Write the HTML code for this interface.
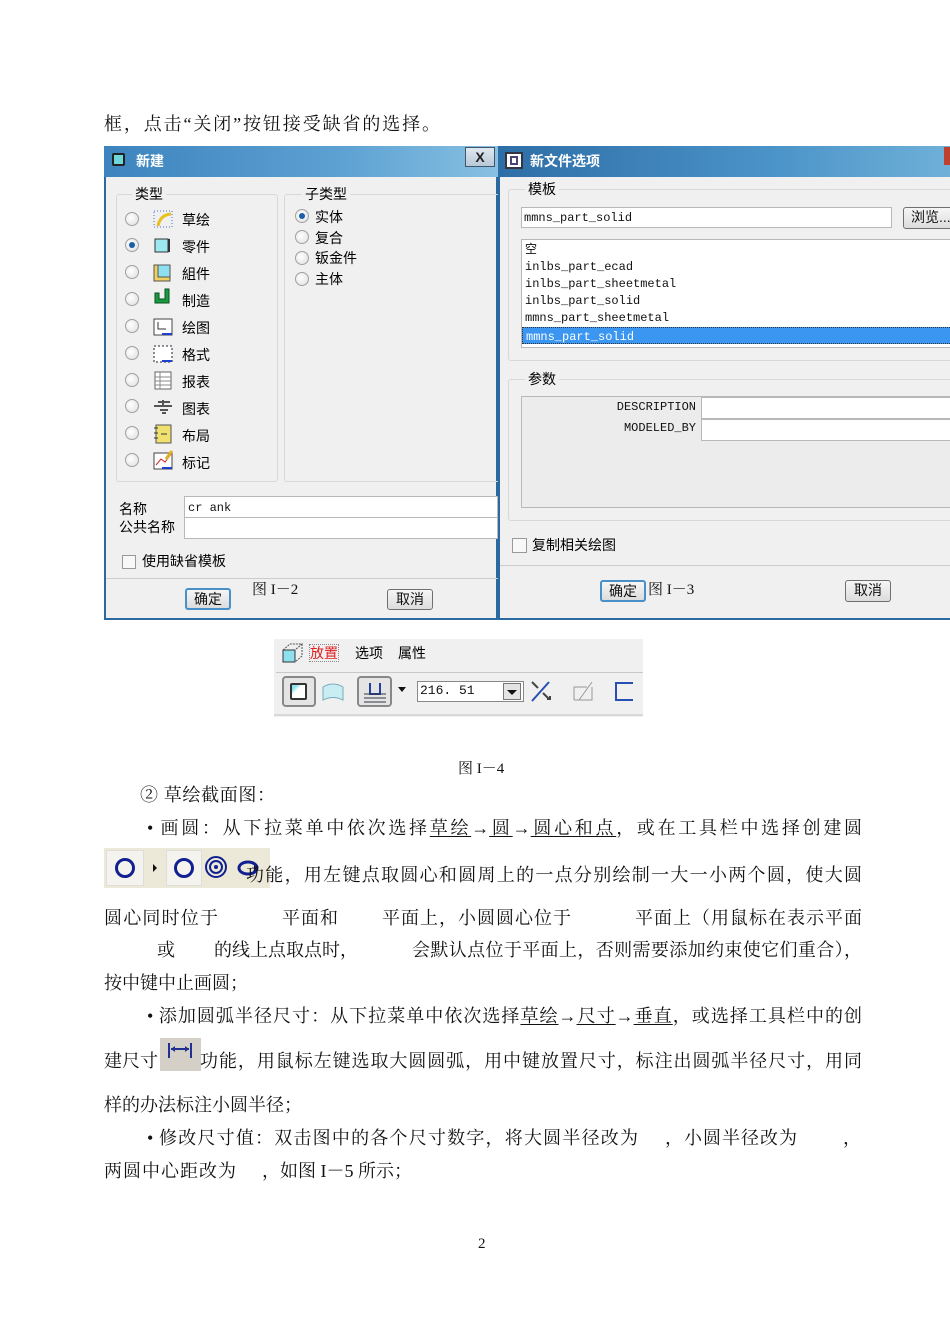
<!DOCTYPE html>
<html><head><meta charset="utf-8"><style>
*{margin:0;padding:0;box-sizing:border-box}
body{width:950px;height:1343px;background:#fff;position:relative;overflow:hidden;font-family:"Liberation Serif","Noto Serif CJK SC",serif;color:#111}
.a{position:absolute}
.t{position:absolute;font-size:18px;line-height:22px;white-space:nowrap;text-align-last:justify;text-align:justify}
.u{text-decoration:underline;text-underline-offset:2px}
.ui{font-family:"Liberation Sans","Noto Sans CJK SC",sans-serif;font-size:14px;line-height:16px;white-space:nowrap;color:#000}
.mono{font-family:"Liberation Mono","DejaVu Sans Mono",monospace;font-size:12px;line-height:14px;white-space:nowrap}
.rad{position:absolute;width:14px;height:14px;border-radius:50%;border:1px solid #a0a0a0;background:radial-gradient(circle at 40% 40%,#fff,#ddd)}
.rad.on::after{content:"";position:absolute;left:3px;top:3px;width:6px;height:6px;border-radius:50%;background:#1a5ea8}
.grp{position:absolute;border:1px solid #d8d8d8;border-radius:3px}
.btn{position:absolute;border:1px solid #707070;border-radius:3px;background:linear-gradient(#f6f6f6,#dcdcdc);text-align:center;font-family:"Liberation Sans","Noto Sans CJK SC",sans-serif;font-size:14px;line-height:19px}
.inp{position:absolute;background:#fff;border:1px solid #b8b8b8}
.title{position:absolute;background:linear-gradient(90deg,#2e6ea6,#4a93c8 60%,#6fb0d8);color:#fff;font-family:"Liberation Sans","Noto Sans CJK SC",sans-serif;font-weight:bold;font-size:14px}
</style></head><body>

<div class="t" style="left:104px;top:113px;width:336px">框，点击“关闭”按钮接受缺省的选择。</div>

<!-- Left dialog -->
<div class="a" style="left:104px;top:146px;width:394px;height:474px;background:#f0f0f0;border:2px solid #2a6aa0;border-top:none"></div>
<div class="title" style="left:104px;top:146px;width:394px;height:31px;background:linear-gradient(90deg,#3d84bf,#5da1d2 60%,#87c0e2)"></div>
<div class="a" style="left:112px;top:153px;width:13px;height:13px;background:#6ed8d8;border:2px solid #222;border-radius:2px"></div>
<div class="a ui" style="left:136px;top:153px;color:#fff;font-weight:bold;font-size:14px">新建</div>
<div class="a" style="left:465px;top:147px;width:30px;height:20px;border:1px solid #456;background:linear-gradient(#dfe8f0,#b8c8d8);font:bold 14px 'Liberation Sans',sans-serif;text-align:center;line-height:18px;color:#222">X</div>
<div class="grp" style="left:116px;top:194px;width:162px;height:288px"></div>
<div class="a ui" style="left:132px;top:186px;background:#f0f0f0;padding:0 3px">类型</div>
<div class="grp" style="left:284px;top:194px;width:216px;height:288px"></div>
<div class="a ui" style="left:302px;top:186px;background:#f0f0f0;padding:0 3px">子类型</div>

<div class="rad" style="left:125px;top:212px"></div>
<div class="rad on" style="left:125px;top:238px"></div>
<div class="rad" style="left:125px;top:265px"></div>
<div class="rad" style="left:125px;top:292px"></div>
<div class="rad" style="left:125px;top:319px"></div>
<div class="rad" style="left:125px;top:346px"></div>
<div class="rad" style="left:125px;top:373px"></div>
<div class="rad" style="left:125px;top:399px"></div>
<div class="rad" style="left:125px;top:426px"></div>
<div class="rad" style="left:125px;top:453px"></div>

<svg class="a" style="left:152px;top:209px" width="24" height="262" viewBox="0 0 24 262">
<rect x="2" y="2" width="18" height="16" fill="none" stroke="#4a6fd0" stroke-dasharray="1 2"/><path d="M6 17 Q8 6 19 5" stroke="#e8c020" stroke-width="3" fill="none"/>
<rect x="3" y="30" width="13" height="13" fill="#9ee8f0" stroke="#333"/><rect x="16" y="30" width="2" height="13" fill="#333"/>
<rect x="2" y="56" width="16" height="16" fill="#f0d060" stroke="#555"/><rect x="6" y="56" width="12" height="12" fill="#8ee0f0" stroke="#555"/>
<path d="M3 84 h4 v6 h6 v-10 h4 v14 h-14z" fill="#1a9a40" stroke="#0a5020"/>
<rect x="2" y="110" width="18" height="16" fill="#fff" stroke="#444"/><path d="M6 113 v7 h8" stroke="#333" fill="none"/><path d="M10 125 h10" stroke="#2040d0" stroke-width="2"/>
<rect x="2" y="137" width="18" height="16" fill="#fff" stroke="#223" stroke-dasharray="2 2"/><path d="M10 152 h10" stroke="#2040d0" stroke-width="2"/>
<rect x="3" y="163" width="16" height="17" fill="#fff" stroke="#666"/><path d="M3 168h16M3 172h16M3 176h16M8 163v17" stroke="#888"/>
<path d="M2 197 h18 M11 191 v6 M6 193 h12 M8 201 h8 M10 204 h4" stroke="#555" stroke-width="2"/>
<rect x="4" y="216" width="15" height="18" fill="#f0e070" stroke="#555"/><path d="M2 219h4M2 224h4M2 229h4M9 225h6" stroke="#333"/>
<rect x="2" y="244" width="18" height="16" fill="#fff" stroke="#444"/><path d="M4 256 l5-6 4 3 7-9" stroke="#d02020" fill="none"/><path d="M20 242 l-6 8" stroke="#e0b020" stroke-width="3"/><path d="M10 259 h10" stroke="#2040d0" stroke-width="2"/>
</svg>
<div class="a ui" style="left:182px;top:207px;line-height:27px">草绘<br>零件<br>組件<br>制造<br>绘图<br>格式<br>报表<br>图表<br>布局<br>标记</div>

<div class="rad on" style="left:295px;top:209px"></div>
<div class="rad" style="left:295px;top:230px"></div>
<div class="rad" style="left:295px;top:251px"></div>
<div class="rad" style="left:295px;top:272px"></div>
<div class="a ui" style="left:315px;top:207px;line-height:20.7px">实体<br>复合<br>钣金件<br>主体</div>

<div class="a ui" style="left:119px;top:501px">名称</div>
<div class="a ui" style="left:119px;top:519px">公共名称</div>
<div class="inp" style="left:184px;top:496px;width:314px;height:22px"></div>
<div class="inp" style="left:184px;top:517px;width:314px;height:22px"></div>
<div class="a mono" style="left:188px;top:501px">cr ank</div>
<div class="a" style="left:122px;top:555px;width:14px;height:14px;border:1px solid #999;background:#f8f8f8"></div>
<div class="a ui" style="left:142px;top:553px">使用缺省模板</div>
<div class="a" style="left:106px;top:578px;width:392px;height:1px;background:#ccc"></div>
<div class="btn" style="left:185px;top:588px;width:46px;height:22px;border:2px solid #4a90c8">确定</div>
<div class="btn" style="left:387px;top:589px;width:46px;height:21px">取消</div>
<div class="a" style="left:252px;top:578px;font-size:15px">图 I－2</div>

<!-- Right dialog -->
<div class="a" style="left:498px;top:146px;width:452px;height:474px;background:#f0f0f0;border:2px solid #2a6aa0;border-top:none;border-right:none"></div>
<div class="title" style="left:498px;top:146px;width:452px;height:31px"></div>
<div class="a" style="left:505px;top:152px;width:18px;height:17px;border:2px solid #334;background:#fff"><div style="position:absolute;left:3px;top:2px;width:8px;height:9px;border:2px solid #447"></div></div>
<div class="a ui" style="left:530px;top:153px;color:#fff;font-weight:bold">新文件选项</div>
<div class="a" style="left:944px;top:147px;width:6px;height:18px;background:#c04030"></div>
<div class="grp" style="left:508px;top:189px;width:446px;height:172px"></div>
<div class="a ui" style="left:525px;top:181px;background:#f0f0f0;padding:0 3px">模板</div>
<div class="inp" style="left:521px;top:207px;width:371px;height:21px"></div>
<div class="a mono" style="left:524px;top:211px">mmns_part_solid</div>
<div class="btn" style="left:903px;top:207px;width:52px;height:22px;text-align:left;padding-left:7px">浏览...</div>
<div class="inp" style="left:521px;top:239px;width:432px;height:109px"></div>
<div class="a mono" style="left:525px;top:242px;line-height:17.1px">空<br>inlbs_part_ecad<br>inlbs_part_sheetmetal<br>inlbs_part_solid<br>mmns_part_sheetmetal</div>
<div class="a mono" style="left:522px;top:327px;width:430px;height:17px;background:#3a96f0;color:#fff;padding:2px 3px;border:1px dotted #333">mmns_part_solid</div>
<div class="grp" style="left:508px;top:379px;width:446px;height:142px"></div>
<div class="a ui" style="left:525px;top:371px;background:#f0f0f0;padding:0 3px">参数</div>
<div class="a" style="left:521px;top:396px;width:432px;height:112px;border:1px solid #b8b8b8;background:#ececec"></div>
<div class="a mono" style="left:560px;top:400px;width:136px;text-align:right">DESCRIPTION</div>
<div class="a mono" style="left:560px;top:421px;width:136px;text-align:right">MODELED_BY</div>
<div class="inp" style="left:701px;top:397px;width:252px;height:22px"></div>
<div class="inp" style="left:701px;top:419px;width:252px;height:22px"></div>
<div class="a" style="left:512px;top:538px;width:15px;height:15px;border:1px solid #999;background:#f8f8f8"></div>
<div class="a ui" style="left:532px;top:537px">复制相关绘图</div>
<div class="a" style="left:500px;top:565px;width:450px;height:1px;background:#ccc"></div>
<div class="btn" style="left:600px;top:580px;width:46px;height:22px;border:2px solid #4a90c8">确定</div>
<div class="btn" style="left:845px;top:580px;width:46px;height:22px">取消</div>
<div class="a" style="left:648px;top:578px;font-size:15px">图 I－3</div>

<!-- Toolbar -->
<div class="a" style="left:274px;top:639px;width:369px;height:78px;background:#f0f0f0"></div>
<svg class="a" style="left:282px;top:642px" width="24" height="22"><rect x="1" y="8" width="12" height="12" fill="#8ee0f0" stroke="#333"/><path d="M1 8 l7-6 h12 l-7 6 M20 2 v12 l-7 6" stroke="#555" stroke-dasharray="2 1" fill="none"/></svg>
<div class="a ui" style="left:310px;top:645px;color:#e02020;outline:1px dotted #888">放置</div>
<div class="a ui" style="left:355px;top:645px">选项</div>
<div class="a ui" style="left:398px;top:645px">属性</div>
<div class="a" style="left:276px;top:672px;width:367px;height:1px;background:#c8c8c8"></div>
<div class="a" style="left:282px;top:676px;width:34px;height:31px;border:2px solid #888;border-radius:4px;background:#e4e4e4"></div>
<div class="a" style="left:290px;top:683px;width:17px;height:17px;border:2px solid #333;background:linear-gradient(135deg,#8ee0f0 20%,#fff 40%);border-radius:2px"></div>
<svg class="a" style="left:321px;top:681px" width="24" height="22"><path d="M2 19 V6 Q12 0 22 6 V19 Q12 14 2 19z" fill="#c8eef4" stroke="#7ab"/></svg>
<div class="a" style="left:357px;top:676px;width:35px;height:31px;border:2px solid #888;border-radius:4px;background:#e4e4e4"></div>
<svg class="a" style="left:362px;top:680px" width="26" height="24"><path d="M8 3 V14 H18 V3" stroke="#2040a0" stroke-width="2" fill="none"/><path d="M2 14 H24 M2 18 H24 M2 22 H24" stroke="#334"/></svg>
<svg class="a" style="left:397px;top:686px" width="10" height="8"><path d="M1 1 H9 L5 6z" fill="#111"/></svg>
<div class="inp" style="left:417px;top:681px;width:107px;height:21px;border-color:#888"></div>
<div class="a mono" style="left:420px;top:684px;font-size:13px">216. 51</div>
<div class="a" style="left:503px;top:683px;width:18px;height:17px;border:1px solid #777;background:#e4e4e4"></div>
<svg class="a" style="left:506px;top:689px" width="12" height="8"><path d="M1 1 H11 L6 6z" fill="#111"/></svg>
<svg class="a" style="left:529px;top:679px" width="24" height="24"><path d="M3 22 L20 3" stroke="#2850b0" stroke-width="2"/><path d="M3 3 l6 6 M14 14 l6 6 M18 20 h3 v-3" stroke="#444" stroke-width="2" fill="none"/></svg>
<svg class="a" style="left:571px;top:679px" width="24" height="24"><path d="M3 21 H21 V8 M3 21 V8 H16 M21 3 L8 21" stroke="#999" fill="none"/></svg>
<svg class="a" style="left:613px;top:680px" width="22" height="22"><path d="M20 3 H3 V20 H20" stroke="#2850b0" stroke-width="2" fill="none"/></svg>
<div class="a" style="left:274px;top:714px;width:369px;height:2px;background:#d8d8d8"></div>

<div class="a" style="left:458px;top:757px;font-size:15px">图 I－4</div>
<div class="t" style="left:140px;top:784px;width:135px">② 草绘截面图：</div>
<div class="t" style="left:147px;top:817px;width:715px">• 画圆：从下拉菜单中依次选择<span class="u">草绘</span>→<span class="u">圆</span>→<span class="u">圆心和点</span>，或在工具栏中选择创建圆</div>

<div class="a" style="left:104px;top:848px;width:166px;height:40px;background:#ece9d8"></div>
<div class="a" style="left:106px;top:850px;width:38px;height:36px;background:#f4f3ee;border:1px solid #ddd"></div>
<div class="a" style="left:166px;top:850px;width:36px;height:36px;background:#f4f3ee;border:1px solid #ddd"></div>
<svg class="a" style="left:104px;top:848px" width="166" height="40">
<circle cx="21" cy="20" r="8.5" fill="none" stroke="#102090" stroke-width="3"/>
<path d="M150 16 l4 4 -4 4z" fill="#111"/><path d="M49 16 l4 4 -4 4z" fill="#111"/>
<circle cx="80" cy="20" r="8.5" fill="none" stroke="#102090" stroke-width="3"/>
<circle cx="112" cy="19" r="10" fill="none" stroke="#102090" stroke-width="2"/><circle cx="112" cy="19" r="6" fill="none" stroke="#102090" stroke-width="2"/><circle cx="112" cy="19" r="2" fill="#102090"/>
<ellipse cx="144" cy="20" rx="9" ry="6" fill="none" stroke="#102090" stroke-width="3"/>
</svg>
<div class="t" style="left:246px;top:864px;width:616px">功能，用左键点取圆心和圆周上的一点分别绘制一大一小两个圆，使大圆</div>

<div class="t" style="left:104px;top:907px;width:114px">圆心同时位于</div>
<div class="t" style="left:282px;top:907px;width:56px">平面和</div>
<div class="t" style="left:382px;top:907px;width:189px">平面上，小圆圆心位于</div>
<div class="t" style="left:635px;top:907px;width:227px">平面上（用鼠标在表示平面</div>
<div class="t" style="left:157px;top:939px;width:18px">或</div>
<div class="t" style="left:214px;top:939px;width:141px">的线上点取点时，</div>
<div class="t" style="left:412px;top:939px;width:450px">会默认点位于平面上，否则需要添加约束使它们重合），</div>
<div class="t" style="left:104px;top:972px;width:141px">按中键中止画圆；</div>
<div class="t" style="left:147px;top:1005px;width:715px">• 添加圆弧半径尺寸：从下拉菜单中依次选择<span class="u">草绘</span>→<span class="u">尺寸</span>→<span class="u">垂直</span>，或选择工具栏中的创</div>
<div class="t" style="left:104px;top:1050px;width:54px">建尺寸</div>
<div class="a" style="left:160px;top:1038px;width:41px;height:33px;background:#d4d0c8"></div>
<svg class="a" style="left:160px;top:1038px" width="41" height="33"><path d="M9 5 V20 M31 5 V20" stroke="#203090" stroke-width="2"/><path d="M11 11 H29" stroke="#203090" stroke-width="2"/><path d="M11 11 l4-3 v6z M29 11 l-4-3 v6z" fill="#203090"/></svg>
<div class="t" style="left:200px;top:1050px;width:662px">功能，用鼠标左键选取大圆圆弧，用中键放置尺寸，标注出圆弧半径尺寸，用同</div>
<div class="t" style="left:104px;top:1094px;width:194px">样的办法标注小圆半径；</div>
<div class="t" style="left:147px;top:1127px;width:491px">• 修改尺寸值：双击图中的各个尺寸数字，将大圆半径改为</div>
<div class="t" style="left:665px;top:1127px;width:132px">，小圆半径改为</div>
<div class="t" style="left:843px;top:1127px;width:18px">，</div>
<div class="t" style="left:104px;top:1160px;width:132px">两圆中心距改为</div>
<div class="t" style="left:262px;top:1160px;width:146px">，如图 I－5 所示；</div>
<div class="a" style="left:478px;top:1236px;font-size:15px">2</div>
</body></html>
